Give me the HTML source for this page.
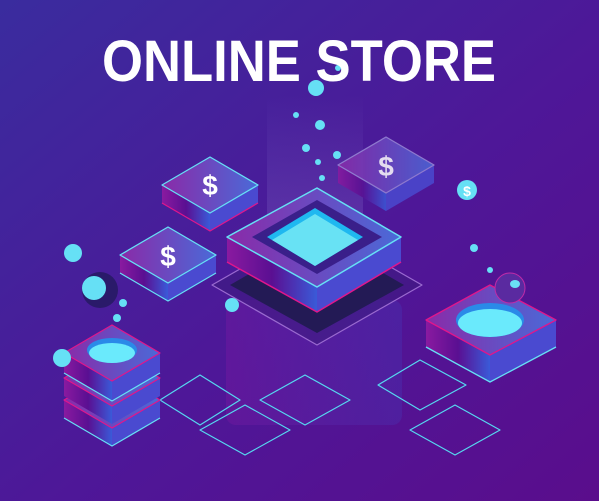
<!DOCTYPE html>
<html><head><meta charset="utf-8"><style>html,body{margin:0;padding:0;background:#4a1a96}svg{display:block}</style></head>
<body>
<svg width="599" height="501" viewBox="0 0 599 501" xmlns="http://www.w3.org/2000/svg" stroke-linejoin="round">
<defs>
<linearGradient id="bg" x1="0" y1="0" x2="1" y2="1">
<stop offset="0" stop-color="#3a2c9e"/><stop offset="0.55" stop-color="#4e1798"/><stop offset="1" stop-color="#5a0d8c"/></linearGradient>
<linearGradient id="side" x1="0" y1="0" x2="1" y2="0">
<stop offset="0" stop-color="#8a1aa0"/><stop offset="0.5" stop-color="#5a0f92"/><stop offset="1" stop-color="#3a5ad8"/></linearGradient>
<linearGradient id="top" x1="0" y1="0" x2="1" y2="0">
<stop offset="0" stop-color="#8a2aa8"/><stop offset="1" stop-color="#4a6ad8"/></linearGradient>
<linearGradient id="beam" x1="0" y1="0" x2="0" y2="1">
<stop offset="0" stop-color="#8a7ad0" stop-opacity="0"/><stop offset="1" stop-color="#8a7ad0" stop-opacity="0.3"/></linearGradient>
<linearGradient id="col" x1="0" y1="0" x2="1" y2="0">
<stop offset="0" stop-color="#9a1aa8" stop-opacity="0.45"/><stop offset="1" stop-color="#3a5ad8" stop-opacity="0.35"/></linearGradient>
</defs>
<rect width="599" height="501" fill="url(#bg)"/>
<rect x="267" y="95" width="96" height="150" fill="url(#beam)"/>
<rect x="226" y="300" width="176" height="125" rx="10" fill="url(#col)" opacity="0.5"/>
<g fill="none" stroke-width="1.2">
<path d="M160,400 L200,375 L240,400 L200,425 Z" stroke="#56d8f0"/>
<path d="M200,430 L245,405 L290,430 L245,455 Z" stroke="#56d8f0"/>
<path d="M260,400 L305,375 L350,400 L305,425 Z" stroke="#56d8f0"/>
<path d="M378,385 L420,360 L466,385 L420,410 Z" stroke="#56d8f0"/>
<path d="M410,430 L455,405 L500,430 L455,455 Z" stroke="#56d8f0"/>
</g>
<path d="M212,285 L317,225 L422,285 L317,345 Z" fill="#3a1a7a" fill-opacity="0.5" stroke="#9a6ad0" stroke-width="1.2"/>
<path d="M230,285 L317,235 L404,285 L317,333 Z" fill="#231a55"/>
<path d="M227,237 L317,287 L317,312 L227,262 Z" fill="url(#side)"/>
<path d="M317,287 L401,237 L401,262 L317,312 Z" fill="#4a4ad0"/>
<path d="M227,262 L317,312 L401,262" fill="none" stroke="#e0168c" stroke-width="1.5"/>
<path d="M227,237 L317,188 L401,237 L317,287 Z" fill="url(#top)" stroke="#66e0f5" stroke-width="1.5"/>
<path d="M252,237 L317,200 L382,237 L317,274 Z" fill="#3a1f8a"/>
<path d="M267,237 L315,208 L363,237 L315,266 Z" fill="#1fb8f0"/>
<path d="M272,240 L315,214 L358,240 L315,266 Z" fill="#68e2f4"/>
<g>
<path d="M162,185 L210,213 L210,231 L162,203 Z" fill="url(#side)"/><path d="M210,213 L258,185 L258,203 L210,231 Z" fill="#4a4ad0"/>
<path d="M162,203 L210,231 L258,203" fill="none" stroke="#e0168c" stroke-width="1.2"/>
<path d="M162,185 L210,157 L258,185 L210,213 Z" fill="url(#top)" stroke="#66e0f5" stroke-width="1.3"/>
<text x="210" y="195" font-family="Liberation Sans,sans-serif" font-weight="bold" font-size="28" fill="#fff" text-anchor="middle">$</text>
</g>
<g>
<path d="M120,255 L168,283 L168,301 L120,273 Z" fill="url(#side)"/><path d="M168,283 L216,255 L216,273 L168,301 Z" fill="#4a4ad0"/>
<path d="M120,273 L168,301 L216,273" fill="none" stroke="#66e0f5" stroke-width="1.2"/>
<path d="M120,255 L168,227 L216,255 L168,283 Z" fill="url(#top)" stroke="#66e0f5" stroke-width="1.3"/>
<text x="168" y="266" font-family="Liberation Sans,sans-serif" font-weight="bold" font-size="28" fill="#fff" text-anchor="middle">$</text>
</g>
<g opacity="0.85">
<path d="M338,165 L386,193 L386,211 L338,183 Z" fill="url(#side)"/><path d="M386,193 L434,165 L434,183 L386,211 Z" fill="#4a4ad0"/>
<path d="M338,165 L386,137 L434,165 L386,193 Z" fill="url(#top)" stroke="#9a8ad8" stroke-width="1.3"/>
<text x="386" y="176" font-family="Liberation Sans,sans-serif" font-weight="bold" font-size="28" fill="#fff" text-anchor="middle">$</text>
</g>
<path d="M426,320 L490,355 L490,382 L426,347 Z" fill="url(#side)"/><path d="M490,355 L556,320 L556,347 L490,382 Z" fill="#4a4ad0"/>
<path d="M426,347 L490,382 L556,347" fill="none" stroke="#66e0f5" stroke-width="1.3"/>
<path d="M426,320 L490,285 L556,320 L490,355 Z" fill="url(#top)" stroke="#e0168c" stroke-width="1.3"/>
<ellipse cx="490" cy="320" rx="34" ry="17" fill="#2a8ae8"/>
<ellipse cx="490" cy="323" rx="32" ry="14" fill="#6aeafc"/>
<circle cx="510" cy="288" r="15" fill="#5a2aa0" stroke="#c02aa8" stroke-width="1"/>
<ellipse cx="515" cy="284" rx="5" ry="4" fill="#6ae0f5"/>
<g>
<path d="M64,400 L112,428 L112,446 L64,418 Z" fill="url(#side)"/><path d="M112,428 L160,400 L160,418 L112,446 Z" fill="#4a4ad0"/>
<path d="M64,418 L112,446 L160,418" fill="none" stroke="#66e0f5" stroke-width="1.2"/>
<path d="M64,400 L112,372 L160,400 L112,428 Z" fill="url(#top)" stroke="#e0168c" stroke-width="1.2"/>
<path d="M64,378 L112,406 L112,424 L64,396 Z" fill="url(#side)"/><path d="M112,406 L160,378 L160,396 L112,424 Z" fill="#4a4ad0"/>
<path d="M64,378 L112,350 L160,378 L112,406 Z" fill="url(#top)" stroke="#e0168c" stroke-width="1.2"/>
<path d="M64,353 L112,381 L112,401 L64,373 Z" fill="url(#side)"/><path d="M112,381 L160,353 L160,373 L112,401 Z" fill="#4a4ad0"/>
<path d="M64,373 L112,401 L160,373" fill="none" stroke="#66e0f5" stroke-width="1.2"/>
<path d="M64,353 L112,325 L160,353 L112,381 Z" fill="url(#top)" stroke="#e0168c" stroke-width="1.2"/>
<ellipse cx="112" cy="350" rx="25" ry="12" fill="#2a8ae8"/>
<ellipse cx="112" cy="353" rx="23" ry="10" fill="#6aeafc"/>
</g>
<g fill="#66e0f5">
<circle cx="316" cy="88" r="8"/><circle cx="338" cy="68" r="3"/><circle cx="296" cy="115" r="3"/><circle cx="320" cy="125" r="5"/>
<circle cx="306" cy="148" r="4"/><circle cx="318" cy="162" r="3"/><circle cx="337" cy="155" r="4"/><circle cx="322" cy="178" r="3"/>
<circle cx="467" cy="190" r="10"/><circle cx="474" cy="248" r="4"/><circle cx="490" cy="270" r="3"/>
<circle cx="73" cy="253" r="9"/><circle cx="123" cy="303" r="4"/><circle cx="117" cy="318" r="4"/><circle cx="62" cy="358" r="9"/>
<circle cx="232" cy="305" r="7"/>
</g>
<text x="467" y="196" font-family="Liberation Sans,sans-serif" font-weight="bold" font-size="14" fill="#fff" text-anchor="middle">$</text>
<circle cx="100" cy="290" r="18" fill="#2a1a6a"/>
<circle cx="94" cy="288" r="12" fill="#66e0f5"/>
<text x="299" y="81" font-family="Liberation Sans,sans-serif" font-weight="bold" font-size="58" fill="#fff" text-anchor="middle" textLength="394" lengthAdjust="spacingAndGlyphs">ONLINE STORE</text>
</svg>
</body></html>
